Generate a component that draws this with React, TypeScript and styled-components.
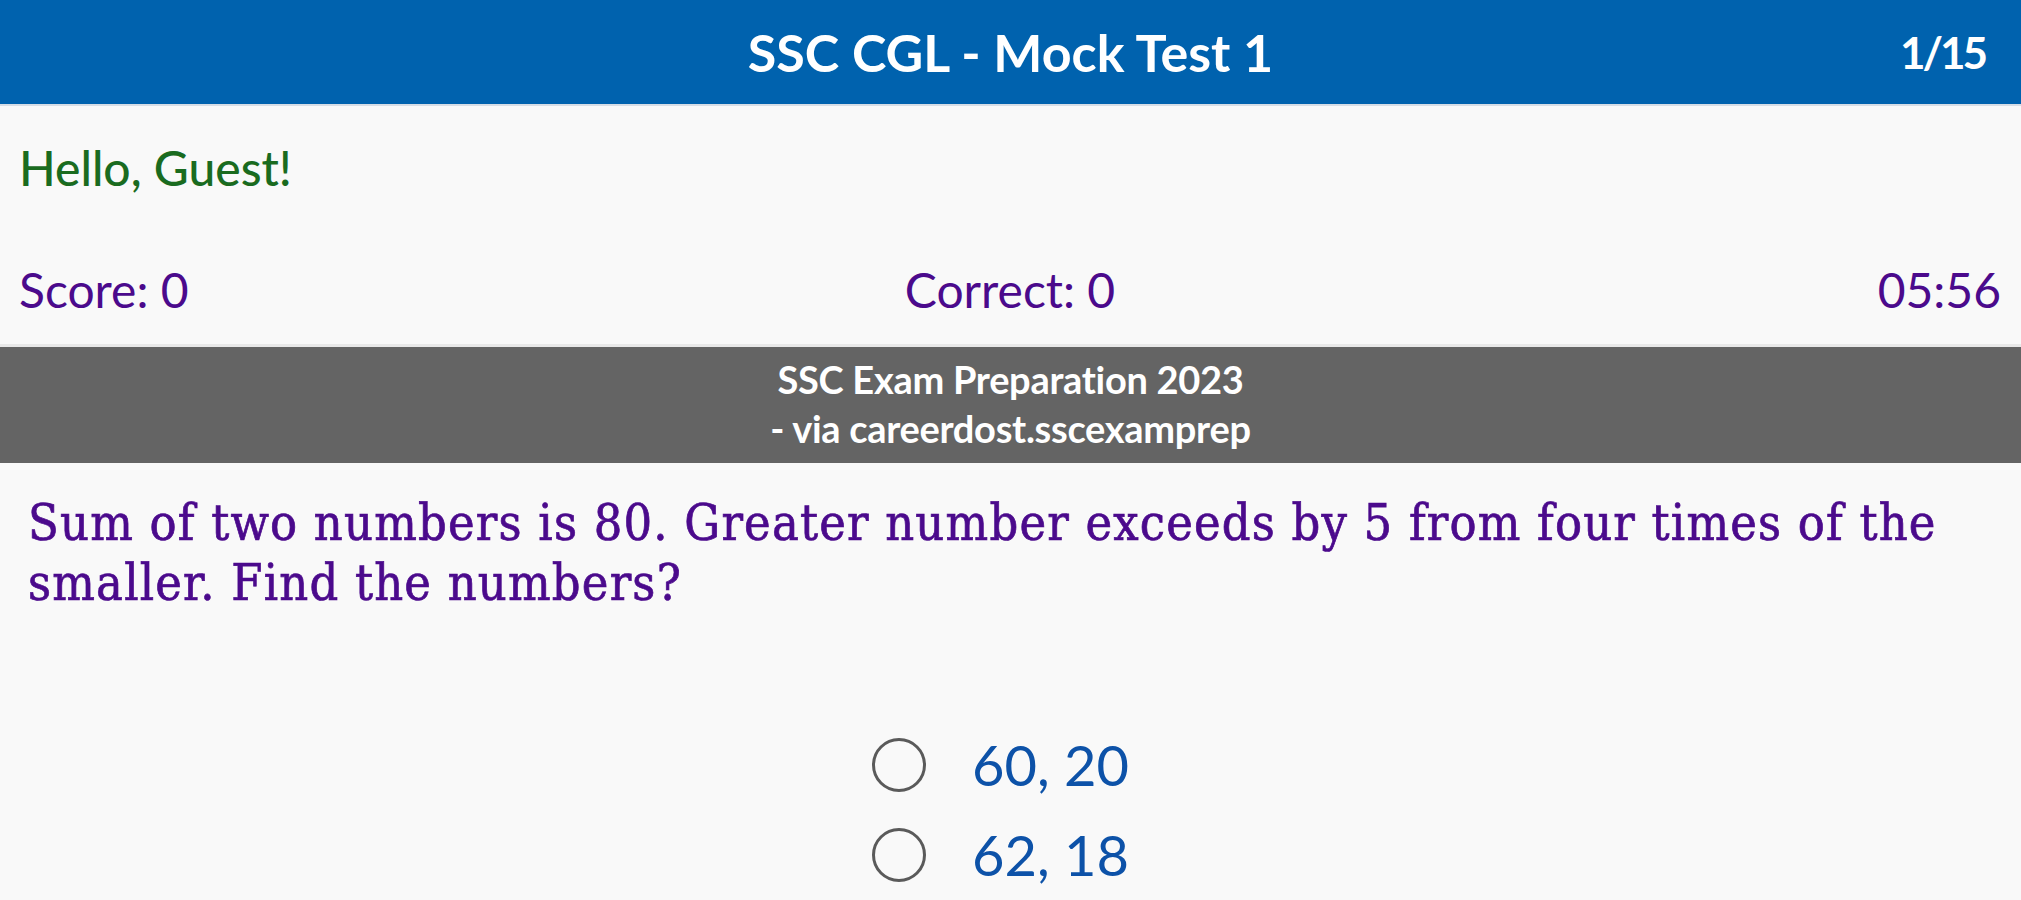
import React, { useState } from "react";
import styled, { createGlobalStyle } from "styled-components";

const GlobalStyle = createGlobalStyle`
    html, body {
        margin: 0;
        padding: 0;
        background: #f9f9f9;
    }
    body {
        font-family: Lato, "Noto Sans", sans-serif;
    }
`;

const Page = styled.div`
    width: 100%;
    min-height: 100vh;
    background: #f9f9f9;
    overflow: hidden;
`;

const Header = styled.header`
    height: 106px;
    background: #0062ae;
    color: #ffffff;
    display: grid;
    grid-template-columns: 1fr auto 1fr;
    align-items: center;
    padding: 0 36px;
    box-sizing: border-box;
    border-bottom: 2px solid #d6dde6;
`;

const Title = styled.h1`
    grid-column: 2;
    margin: 0;
    font-size: 52px;
    font-weight: 700;
    letter-spacing: 0;
`;

const Counter = styled.div`
    justify-self: end;
    font-size: 44px;
    font-weight: 700;
    letter-spacing: -3px;
`;

const Greeting = styled.div`
    color: #1a6b1f;
    font-size: 48px;
    font-weight: 500;
    padding: 32px 19px 0;
    line-height: 60px;
`;

const Stats = styled.div`
    display: grid;
    grid-template-columns: 1fr auto 1fr;
    align-items: center;
    padding: 0 20px 0 19px;
    margin-top: 62px;
    color: #4b0a8c;
    font-size: 48px;
    line-height: 60px;
`;

const Stat = styled.span<{ $align: "start" | "center" | "end" }>`
    justify-self: ${p => p.$align};
`;

const Banner = styled.div`
    margin-top: 24px;
    background: #646464;
    border-top: 3px solid #e9e9e9;
    color: #ffffff;
    text-align: center;
    font-size: 38px;
    font-weight: 700;
    line-height: 49px;
    padding: 8px 0 10px;
    letter-spacing: -0.3px;
`;

const Question = styled.p`
    margin: 0;
    padding: 30px 28px 0;
    color: #4b0a8c;
    font-family: "DejaVu Serif Condensed", "DejaVu Serif", serif;
    font-size: 50px;
    letter-spacing: 1.2px;
    line-height: 60px;
    -webkit-text-stroke: 0.7px #4b0a8c;
`;

const Options = styled.div`
    display: flex;
    flex-direction: column;
    align-items: flex-start;
    width: max-content;
    margin: 120px auto 0;
    padding-right: 20px;
    gap: 26px;
`;

const Option = styled.label`
    display: flex;
    align-items: center;
    gap: 46px;
    cursor: pointer;
    color: #0d52a8;
    font-size: 56px;
    line-height: 64px;
`;

const Radio = styled.span<{ $checked: boolean }>`
    width: 54px;
    height: 54px;
    border-radius: 50%;
    border: 3px solid #5a5a5a;
    box-sizing: border-box;
    display: flex;
    align-items: center;
    justify-content: center;
    &::after {
        content: "";
        width: 28px;
        height: 28px;
        border-radius: 50%;
        background: ${p => (p.$checked ? "#0d52a8" : "transparent")};
    }
`;

const answers = ["60, 20", "62, 18", "65, 15", "64, 16"];

function App() {
    const [picked, setPicked] = useState<number | null>(null);

    return (
        <Page>
            <GlobalStyle />
            <Header>
                <Title>SSC CGL - Mock Test 1</Title>
                <Counter>1/15</Counter>
            </Header>
            <Greeting>Hello, Guest!</Greeting>
            <Stats>
                <Stat $align="start">Score: 0</Stat>
                <Stat $align="center">Correct: 0</Stat>
                <Stat $align="end">05:56</Stat>
            </Stats>
            <Banner>
                SSC Exam Preparation 2023
                <br />- via careerdost.sscexamprep
            </Banner>
            <Question>
                Sum of two numbers is 80. Greater number exceeds by 5 from four times of the
                smaller. Find the numbers?
            </Question>
            <Options>
                {answers.map((a, i) => (
                    <Option key={a} onClick={() => setPicked(i)}>
                        <Radio $checked={picked === i} />
                        {a}
                    </Option>
                ))}
            </Options>
        </Page>
    );
}

export default App;
